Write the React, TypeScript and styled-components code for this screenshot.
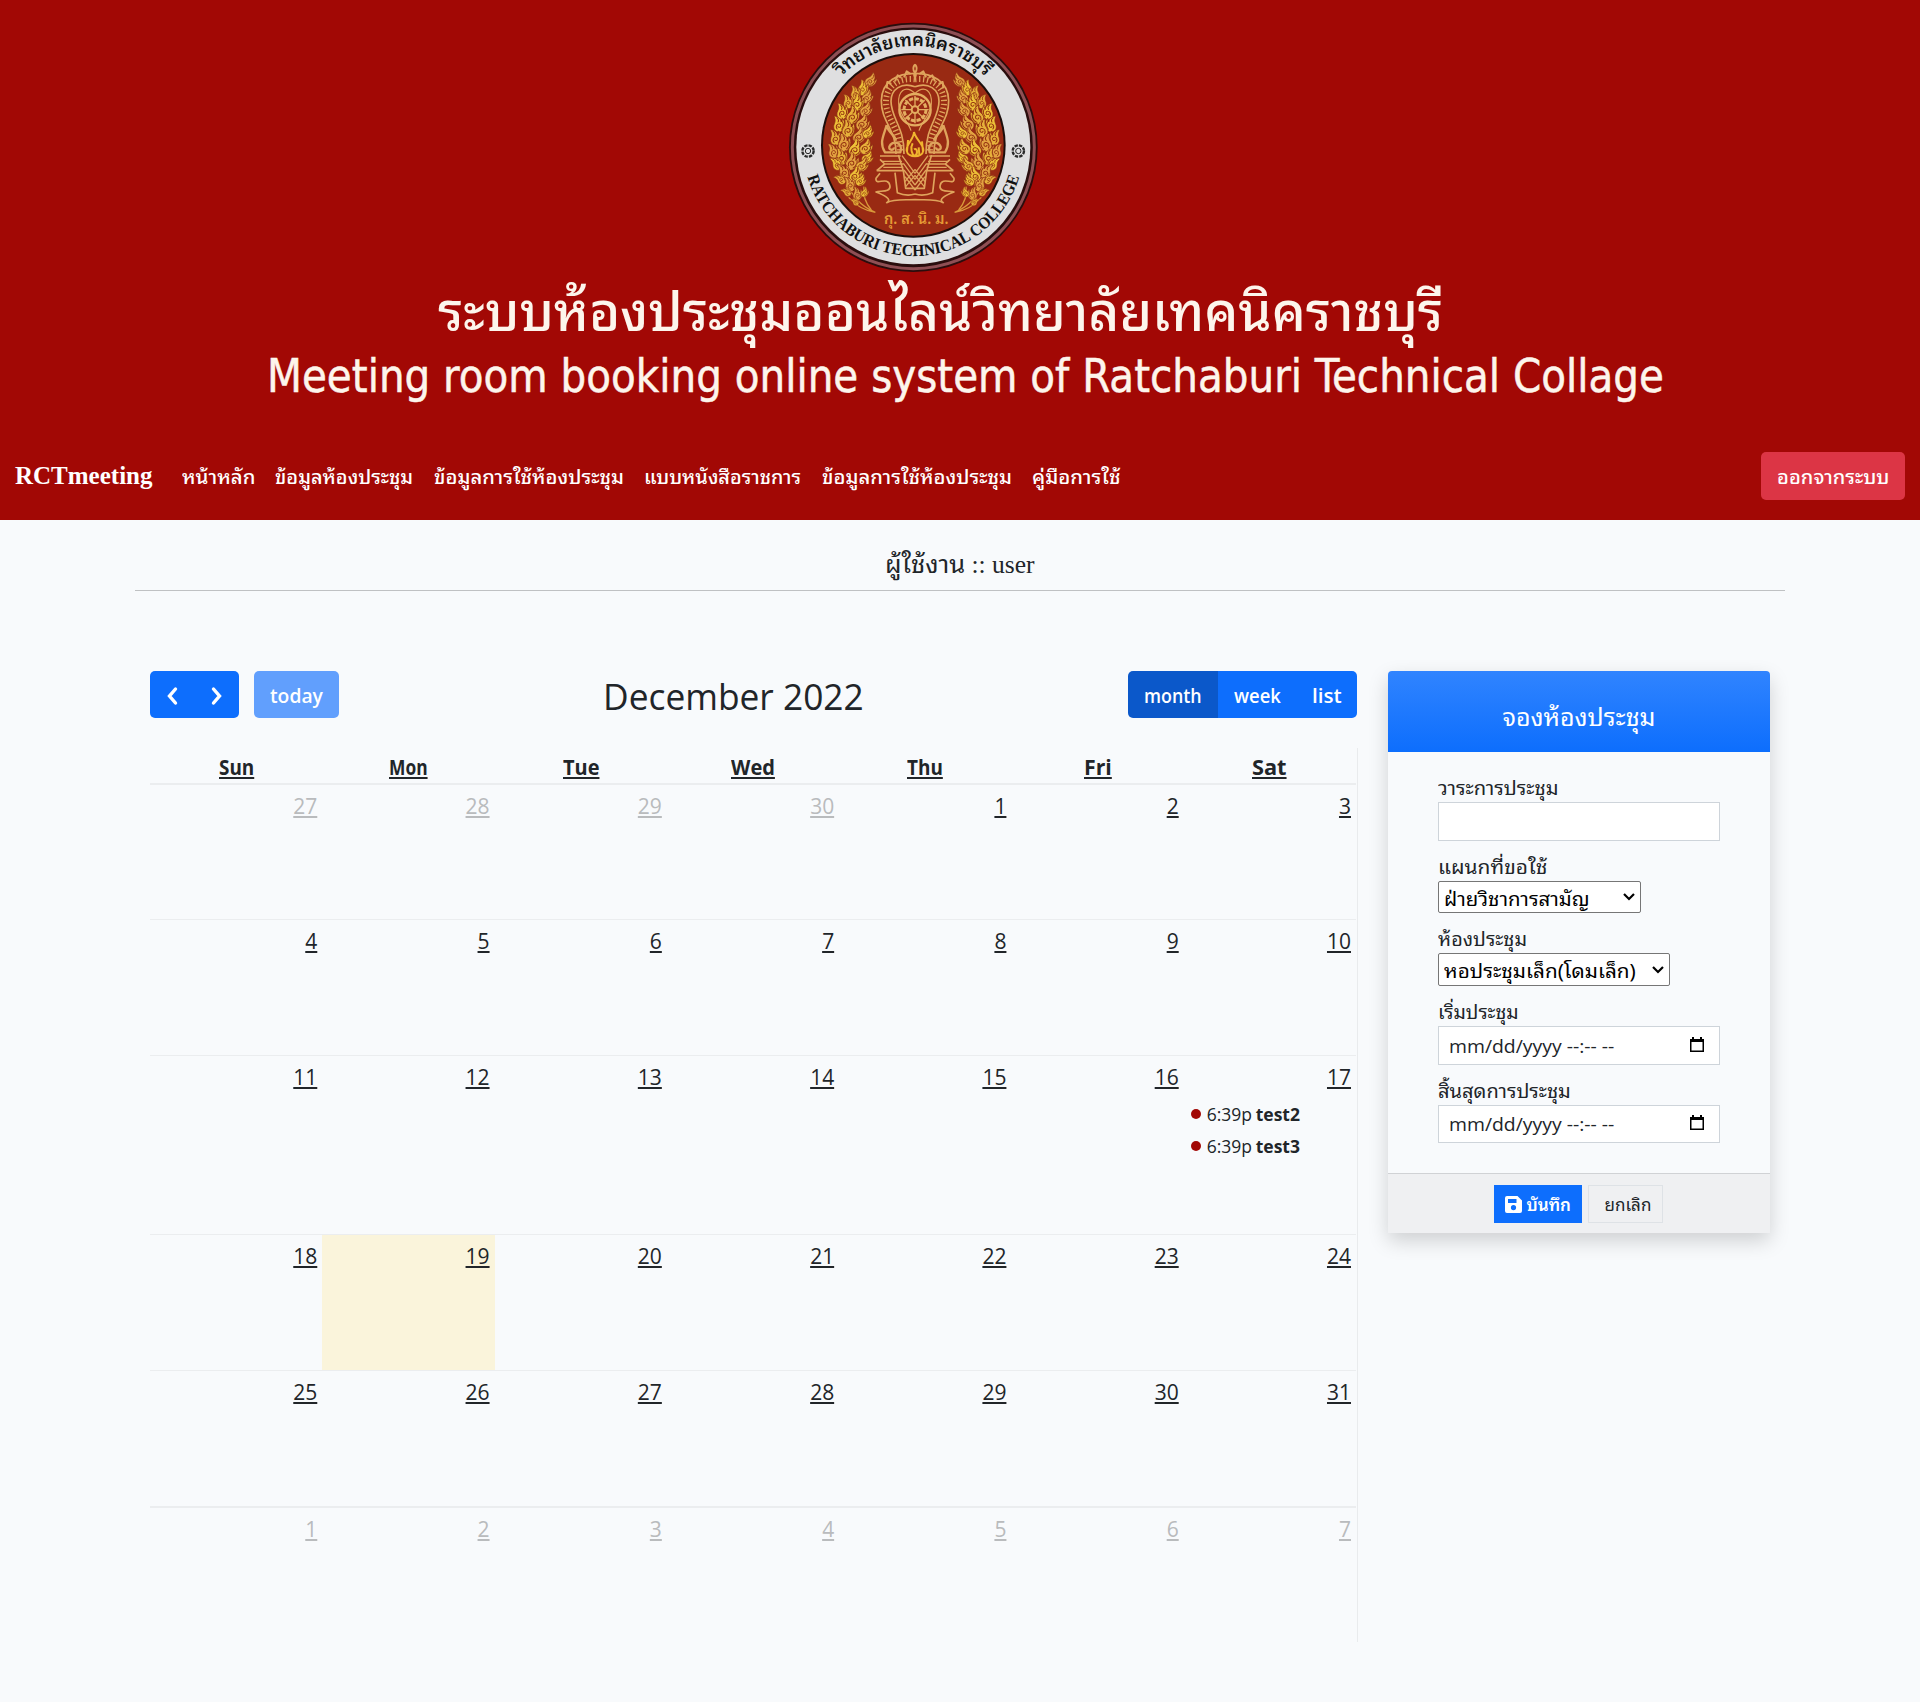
import React, { useLayoutEffect, useRef, useState } from "react";
import styled, { createGlobalStyle } from "styled-components";

const comic = `"Open Sans", "Noto Sans", "Noto Sans Thai", sans-serif`;
const thai = `"Noto Sans Thai Looped", "Noto Looped Thai", "Loma", "Waree", "Garuda", "Noto Sans Thai", "Noto Sans", sans-serif`;
const serif = `"Liberation Serif", "Noto Sans Thai Looped", "Noto Looped Thai", "Loma", "Waree", "Garuda", serif`;

const GlobalStyle = createGlobalStyle`
  *, *::before, *::after { box-sizing: border-box; }
  body { margin: 0; background: #f8fafc; color: #212529; font-family: ${comic}; font-size: 20px; }
  button, select, input { font-family: inherit; }
`;

/* Text that is condensed or widened to a known measure */
const FitBox = styled.span<{ $w: number }>`
  display: inline-block;
  flex: none;
  width: ${(p) => p.$w}px;
  text-align: left;
  white-space: nowrap;
  text-decoration: inherit;
`;
const FitInner = styled.span`
  display: inline-block;
  transform-origin: 0 50%;
  white-space: nowrap;
  text-decoration: inherit;
`;
function Fit({ w, children }: { w: number; children: React.ReactNode }) {
  const ref = useRef<HTMLSpanElement>(null);
  const [scale, setScale] = useState(1);
  useLayoutEffect(() => {
    if (ref.current && ref.current.offsetWidth) {
      setScale(w / ref.current.offsetWidth);
    }
  }, [w]);
  return (
    <FitBox $w={w}>
      <FitInner ref={ref} style={{ transform: `scaleX(${scale})` }}>
        {children}
      </FitInner>
    </FitBox>
  );
}

/* ---------- banner ---------- */
const Banner = styled.header`
  height: 520px;
  background: #a20805;
  color: #fff;
  display: flex;
  flex-direction: column;
`;
const Hero = styled.div`
  height: 430px;
  padding-top: 10px;
  display: flex;
  flex-direction: column;
  color: #fdf5ec;
`;
const LogoSvg = styled.svg`
  display: block;
  flex: none;
  margin-left: 770px;
`;
const ThaiTitle = styled.div`
  height: 66px;
  margin-left: 438px;
  font: 500 54px/54px ${thai};
`;
const EnglishTitle = styled.div`
  height: 60px;
  margin-left: 267px;
  font: 47px/60px "DejaVu Sans Condensed", "DejaVu Sans", sans-serif;
  font-stretch: condensed;
  -webkit-text-stroke: 0.5px #fdf5ec;
`;
const Nav = styled.nav`
  height: 90px;
  padding: 2px 15px 0;
  display: flex;
  align-items: center;
`;
const Brand = styled.a`
  font: bold 25px/38px ${serif};
  margin-right: 30px;
`;
const Links = styled.div`
  display: flex;
  gap: 20.4px;
  flex: 1;
`;
const NavLink = styled.a`
  font: 500 19px/28px ${thai};
`;
const Logout = styled.button`
  width: 144px;
  height: 48px;
  border: 0;
  border-radius: 5px;
  padding: 0 0 1px;
  background: #dc3545;
  color: #fff;
  font: 500 19px/30px ${thai};
`;

/* ---------- page ---------- */
const Page = styled.main`
  width: 1650px;
  margin: 0 auto;
`;
const UserLine = styled.div`
  height: 71px;
  padding-top: 25px;
  border-bottom: 1px solid #bfc1c3;
  text-align: center;
  font: 25px/40px ${serif};
`;
const Columns = styled.div`
  display: flex;
  padding: 80px 15px 0;
  align-items: flex-start;
`;
const Calendar = styled.section`
  width: 1208px;
  margin-right: 30px;
`;
const Toolbar = styled.div`
  height: 47px;
  display: flex;
  justify-content: space-between;
  padding-right: 1px;
`;
const Group = styled.div`
  display: flex;
`;
const ToolButton = styled.button<{ $w: number; $tone?: string; $pos?: "first" | "mid" | "last" }>`
  width: ${(p) => p.$w}px;
  height: 47px;
  border: 0;
  padding: 2px 0 0;
  display: flex;
  align-items: center;
  justify-content: center;
  color: #fff;
  background: ${(p) => p.$tone || "#0d6efd"};
  border-radius: ${(p) =>
    p.$pos === "first" ? "5px 0 0 5px" : p.$pos === "last" ? "0 5px 5px 0" : p.$pos === "mid" ? "0" : "5px"};
  font: 600 20px/30px ${comic};
`;
const Gap = styled.div`
  width: 15px;
`;
const MonthTitle = styled.h2`
  margin: 0;
  font: 400 36px/51px ${comic};
`;
const Grid = styled.div`
  margin-top: 30px;
  border-right: 1px solid #e9ebed;
`;
const HeadRow = styled.div`
  display: grid;
  grid-template-columns: repeat(7, 1fr);
  height: 37px;
  border-bottom: 2px solid #ebedef;
  margin-right: 1px;
`;
const HeadCell = styled.div`
  text-align: center;
  font: 700 20.5px/38px ${comic};
  text-decoration: underline;
  text-decoration-thickness: 2px;
  text-underline-offset: 2px;
`;
const Week = styled.div<{ $h: number; $line?: number }>`
  display: grid;
  grid-template-columns: repeat(7, 1fr);
  height: ${(p) => p.$h}px;
  margin-right: 1px;
  border-bottom: ${(p) => p.$line ?? 1}px solid #ebedef;
`;
const Day = styled.div<{ $today?: boolean }>`
  padding: 5px 5px 0;
  background: ${(p) => (p.$today ? "#faf4db" : "transparent")};
`;
const DayNumber = styled.div<{ $muted?: boolean }>`
  text-align: right;
  font: 21px/32px ${comic};
  height: 37px;
  color: ${(p) => (p.$muted ? "#b9bbbd" : "#212529")};
  text-decoration: underline;
  text-decoration-thickness: 2px;
  text-underline-offset: 2px;
`;
const Event = styled.div`
  display: flex;
  align-items: center;
  height: 32px;
  padding-left: 2px;
  font: 17.5px/32px ${comic};
`;
const Dot = styled.i`
  width: 10px;
  height: 10px;
  border-radius: 50%;
  background: #a20805;
  margin-right: 6px;
`;
const EventName = styled.b`
  margin-left: 4px;
`;

/* ---------- booking card ---------- */
const Card = styled.aside`
  width: 382px;
  border-radius: 4px;
  box-shadow: 0 8px 20px rgba(0, 0, 0, 0.17);
  background: #f8fafc;
`;
const CardHead = styled.div`
  height: 81px;
  border-radius: 4px 4px 0 0;
  background: linear-gradient(180deg, #3084ff, #0d6efd);
  color: #fff;
  text-align: center;
  font: 25px/88px ${thai};
`;
const CardBody = styled.div`
  height: 421px;
  padding: 20px 50px 0;
`;
const Label = styled.label`
  display: block;
  height: 30px;
  font: 19px/30px ${thai};
`;
const Input = styled.div<{ $h?: number }>`
  height: ${(p) => p.$h ?? 39}px;
  margin-bottom: 10px;
  background: #fff;
  border: 1px solid #ced4da;
  display: flex;
  align-items: center;
  justify-content: space-between;
  padding: 0 15px 0 10px;
  font: 17.5px/30px ${comic};
`;
const Select = styled.div<{ $w: number; $h: number }>`
  width: ${(p) => p.$w}px;
  height: ${(p) => p.$h}px;
  margin-bottom: 10px;
  background: #fff;
  color: #000;
  border: 1px solid #767676;
  border-radius: 2px;
  display: flex;
  align-items: center;
  justify-content: space-between;
  padding: 0 5px;
  font: 19px/30px ${thai};
`;
const SelectText = styled.span`
  padding-top: 1px;
`;
const CardFoot = styled.div`
  height: 60px;
  border-top: 1px solid #d0d2d5;
  background: #eff0f2;
  display: flex;
  justify-content: center;
  padding: 11px 2px 0 0;
  gap: 6px;
`;
const SmallButton = styled.button<{ $primary?: boolean }>`
  width: ${(p) => (p.$primary ? 88 : 75)}px;
  height: 38px;
  border: 1px solid ${(p) => (p.$primary ? "#0d6efd" : "#dee2e6")};
  background: ${(p) => (p.$primary ? "#0d6efd" : "transparent")};
  color: ${(p) => (p.$primary ? "#fff" : "#212529")};
  display: flex;
  align-items: center;
  justify-content: ${(p) => (p.$primary ? "center" : "flex-end")};
  gap: 5px;
  padding: 0 10px;
  font: ${(p) => (p.$primary ? 600 : 400)} 17px/30px ${thai};
`;

/* x, y, scale, tilt of each tongue of flame, drawn from the tip of the wing down */
const flames: [number, number, number, number][] = [
  [302, 212, 0.8, 30], [278, 236, 0.85, 5], [256, 250, 0.8, -12], [292, 262, 0.8, 25],
  [262, 280, 0.95, 8], [234, 276, 0.8, -15], [288, 300, 0.85, 28], [216, 306, 0.9, -12],
  [248, 318, 1, 8], [278, 340, 0.95, 24], [206, 344, 0.9, -14], [234, 358, 1, -4],
  [268, 378, 0.95, 20], [294, 368, 0.75, 30], [196, 384, 0.9, -18], [222, 400, 1, -6],
  [256, 416, 1, 14], [288, 412, 0.9, 24], [190, 424, 0.85, -22], [292, 444, 0.75, 38],
  [214, 442, 0.95, -12], [246, 456, 1, 8], [200, 462, 0.8, -38], [276, 466, 0.85, 34],
  [222, 486, 0.9, -30], [256, 496, 0.9, 16], [212, 508, 0.7, -60], [240, 524, 0.85, -24],
  [272, 512, 0.7, 32], [230, 546, 0.6, -62], [262, 552, 0.75, -10], [284, 548, 0.55, 20],
  [256, 576, 0.5, -50],
];

function FlameWing() {
  return (
    <g>
      <path d="M222 500Q250 580 316 607Q270 600 236 562" fill="none" stroke="#d9993a" strokeWidth="4" />
      <path d="M282 530Q276 566 304 600" fill="none" stroke="#d9993a" strokeWidth="4" />
      {flames.map(([x, y, s, r], i) => (
        <g key={i} transform={`translate(${x} ${y}) rotate(${r}) scale(${s * 1.2} ${s * 1.08})`} strokeLinecap="round">
          <path
            d="M0 24C-17 20-19 5-11-6C-6-13-5-19-7-30C5-24 11-14 8-6C13-9 14-13 14-18C21-4 17 18 0 24Z"
            fill={i % 3 === 0 ? "#e2a241" : i % 3 === 1 ? "#edc038" : "#e6b03a"}
            stroke="#8c2a12"
            strokeWidth="2"
          />
          <path d="M-7 12C-12 0 2-8 5 2C6 9-2 11-3 5M0-22C4-16 2-10 0-8M12-6C14 2 12 10 5 16" fill="none" stroke="#93300f" strokeWidth="2.6" />
        </g>
      ))}
    </g>
  );
}

function HalfThrone() {
  return (
    <g fill="none" stroke="#dfa45c" strokeWidth="5" strokeLinejoin="round">
      <path d="M435 190C385 190 335 212 334 272C333 335 380 360 378 432M435 230C395 215 363 238 363 274C363 325 403 350 402 432" />
      <path d="M435 208C388 203 350 225 348 273C347 328 391 352 390 428" strokeWidth="18" strokeDasharray="4 8" />
      <path d="M435 250C405 222 383 245 386 282C389 315 415 335 423 362" strokeWidth="3.5" />
      <path d="M350 345C342 375 326 398 345 427H391C402 395 365 389 358 410C355 422 374 422 371 412M350 345C353 367 374 373 378 392" strokeWidth="7" />
      <path d="M435 163C418 184 447 189 435 200M402 202L410 184L422 192M375 214L383 196L393 203M350 235L352 216L364 222" strokeWidth="6" />
      <path d="M330 438H392M330 448L344 462H400M320 482L344 462M320 482H402M330 490L318 505C315 530 355 495 360 528C362 548 330 541 318 546C340 554 369 568 350 578C371 566 400 570 435 569M385 435L400 482L407 535H435M375 488L382 548Q410 560 435 552" />
      <path d="M334 454H396M340 472H400" strokeWidth="3.5" />
      <path d="M396 437L435 490M400 460L435 508M402 480L435 525M405 500L435 540M407 530L435 496M405 515L435 478" strokeWidth="4" />
    </g>
  );
}

function Logo() {
  return (
    <LogoSvg width="290" height="270" viewBox="0 0 870 810">
      <defs>
        <path id="arcTop" d="M131 407A299 299 0 0 1 729 407" />
        <path id="arcBottom" d="M99 407A331 331 0 0 0 761 407" />
      </defs>
      <ellipse cx="430" cy="412" rx="373" ry="374" fill="#2a0d0d" />
      <ellipse cx="430" cy="412" rx="363" ry="364" fill="none" stroke="#8f4f54" strokeWidth="9" />
      <ellipse cx="430" cy="411" rx="351" ry="352" fill="#dfdfe0" />
      <circle cx="430" cy="406" r="277" fill="#1c0e0b" />
      <circle cx="430" cy="406" r="271" fill="#992a13" />
      <text fontFamily={thai} fontSize="54" fontWeight="600" fill="#111">
        <textPath href="#arcTop" startOffset="50%" textAnchor="middle" textLength="482" lengthAdjust="spacingAndGlyphs">วิทยาลัยเทคนิคราชบุรี</textPath>
      </text>
      <text fontFamily="Liberation Serif, serif" fontSize="50" fontWeight="700" fill="#111">
        <textPath href="#arcBottom" startOffset="50%" textAnchor="middle" textLength="850" lengthAdjust="spacingAndGlyphs">RATCHABURI TECHNICAL COLLEGE</textPath>
      </text>
      {[114, 745].map((x) => (
        <g key={x} fill="none" stroke="#292929">
          <circle cx={x} cy="423" r="17" strokeWidth="7" strokeDasharray="10 3.3" />
          <circle cx={x} cy="423" r="8" strokeWidth="3" />
        </g>
      ))}
      <FlameWing />
      <g transform="translate(870 0) scale(-1 1)"><FlameWing /></g>
      <HalfThrone />
      <g transform="translate(870 0) scale(-1 1)"><HalfThrone /></g>
      <g fill="none" stroke="#e3ad60">
        <circle cx="435" cy="299" r="47" strokeWidth="7" />
        <circle cx="435" cy="299" r="33" strokeWidth="9" strokeDasharray="13 4" />
        <circle cx="435" cy="299" r="10" strokeWidth="6" />
        {[0, 45, 90, 135].map((a) => (
          <path key={a} d="M435 258V290M435 308V340" strokeWidth="4" transform={`rotate(${a} 435 299)`} />
        ))}
        <path d="M432 366C432 388 408 402 410 422C413 444 457 444 460 422C462 404 438 390 432 366ZM428 400C420 414 425 434 435 438C446 429 440 412 432 418M414 390L411 425M456 394L459 425M446 412L448 434" stroke="#f0b52f" strokeWidth="6" />
      </g>
      <text x="342" y="642" fontFamily={thai} fontSize="48" fontWeight="600" fill="#e59a35" textLength="194" lengthAdjust="spacingAndGlyphs">กุ. ส. นิ. ม.</text>
    </LogoSvg>
  );
}

const navLinks: [string, number][] = [
  ["หน้าหลัก", 73], ["ข้อมูลห้องประชุม", 138.5], ["ข้อมูลการใช้ห้องประชุม", 189.5],
  ["แบบหนังสือราชการ", 157.5], ["ข้อมูลการใช้ห้องประชุม", 189.5], ["คู่มือการใช้", 89],
];
const heads: [string, number][] = [["Sun", 35], ["Mon", 39], ["Tue", 36], ["Wed", 44], ["Thu", 36], ["Fri", 28], ["Sat", 35]];
const weeks = [
  { h: 135, start: -3 }, { h: 136, start: 4 }, { h: 179, start: 11 },
  { h: 136, start: 18 }, { h: 137, start: 25, line: 2 }, { h: 134, start: 32, line: 0 },
];
const events = [["6:39p", "test2"], ["6:39p", "test3"]];

const Chevron = ({ d }: { d: string }) => (
  <svg width="20" height="20" viewBox="0 0 20 20" fill="none" stroke="#fff" strokeWidth="3.4" strokeLinecap="round">
    <path d={d} />
  </svg>
);
const SelectArrow = () => (
  <svg width="12" height="8" viewBox="0 0 12 8" fill="none" stroke="#000" strokeWidth="2.2">
    <path d="M1 1L6 6L11 1" />
  </svg>
);
const CalendarIcon = () => (
  <svg width="14" height="18" viewBox="0 0 14 18">
    <path d="M2 0H4V2H10V0H12V2H14V15H0V2H2ZM1.5 5V13.5H12.5V5Z" fillRule="evenodd" fill="#000" />
  </svg>
);
const SaveIcon = () => (
  <svg width="17" height="17" viewBox="0 0 17 17">
    <path d="M2 0H12.5L17 4.5V15Q17 17 15 17H2Q0 17 0 15V2Q0 0 2 0ZM3 3V7H11.5V3ZM8.5 9A2.6 2.6 0 1 0 8.5 14.2A2.6 2.6 0 1 0 8.5 9" fillRule="evenodd" fill="#fff" />
  </svg>
);
const DateField = ({ h }: { h: number }) => (
  <Input $h={h}>
    <Fit w={165}>mm/dd/yyyy --:-- --</Fit>
    <CalendarIcon />
  </Input>
);

export default function App() {
  return (
    <>
      <GlobalStyle />
      <Banner>
        <Hero>
          <Logo />
          <ThaiTitle><Fit w={1005}>ระบบห้องประชุมออนไลน์วิทยาลัยเทคนิคราชบุรี</Fit></ThaiTitle>
          <EnglishTitle><Fit w={1397}>Meeting room booking online system of Ratchaburi Technical Collage</Fit></EnglishTitle>
        </Hero>
        <Nav>
          <Brand><Fit w={137}>RCTmeeting</Fit></Brand>
          <Links>
            {navLinks.map(([t, w], i) => <NavLink key={i}><Fit w={w}>{t}</Fit></NavLink>)}
          </Links>
          <Logout><Fit w={112}>ออกจากระบบ</Fit></Logout>
        </Nav>
      </Banner>
      <Page>
        <UserLine><Fit w={150}>ผู้ใช้งาน :: user</Fit></UserLine>
        <Columns>
          <Calendar>
            <Toolbar>
              <Group>
                <ToolButton $w={45} $pos="first"><Chevron d="M12.5 3L6.5 10L12.5 17" /></ToolButton>
                <ToolButton $w={44} $pos="last"><Chevron d="M6.5 3L12.5 10L6.5 17" /></ToolButton>
                <Gap />
                <ToolButton $w={85} $tone="#619ffd"><Fit w={53}>today</Fit></ToolButton>
              </Group>
              <MonthTitle><Fit w={261}>December 2022</Fit></MonthTitle>
              <Group>
                <ToolButton $w={90} $pos="first" $tone="#0b58ca"><Fit w={58}>month</Fit></ToolButton>
                <ToolButton $w={78} $pos="mid"><Fit w={47}>week</Fit></ToolButton>
                <ToolButton $w={61} $pos="last"><Fit w={30}>list</Fit></ToolButton>
              </Group>
            </Toolbar>
            <Grid>
              <HeadRow>
                {heads.map(([t, w]) => <HeadCell key={t}><Fit w={w}>{t}</Fit></HeadCell>)}
              </HeadRow>
              {weeks.map((wk) => (
                <Week key={wk.start} $h={wk.h} $line={wk.line}>
                  {[0, 1, 2, 3, 4, 5, 6].map((i) => {
                    const n = wk.start + i;
                    const muted = n < 1 || n > 31;
                    const label = n < 1 ? n + 30 : n > 31 ? n - 31 : n;
                    return (
                      <Day key={i} $today={n === 19}>
                        <DayNumber $muted={muted}>{label}</DayNumber>
                        {n === 17 && events.map(([time, name]) => (
                          <Event key={name}>
                            <Dot />
                            <Fit w={45}>{time}</Fit>
                            <EventName><Fit w={44}>{name}</Fit></EventName>
                          </Event>
                        ))}
                      </Day>
                    );
                  })}
                </Week>
              ))}
            </Grid>
          </Calendar>
          <Card>
            <CardHead><Fit w={153}>จองห้องประชุม</Fit></CardHead>
            <CardBody>
              <Label><Fit w={121}>วาระการประชุม</Fit></Label>
              <Input />
              <Label><Fit w={109}>แผนกที่ขอใช้</Fit></Label>
              <Select $w={203} $h={32}><SelectText><Fit w={146}>ฝ่ายวิชาการสามัญ</Fit></SelectText><SelectArrow /></Select>
              <Label><Fit w={89}>ห้องประชุม</Fit></Label>
              <Select $w={232} $h={33}><SelectText><Fit w={192}>หอประชุมเล็ก(โดมเล็ก)</Fit></SelectText><SelectArrow /></Select>
              <Label><Fit w={81}>เริ่มประชุม</Fit></Label>
              <DateField h={39} />
              <Label><Fit w={133}>สิ้นสุดการประชุม</Fit></Label>
              <DateField h={38} />
            </CardBody>
            <CardFoot>
              <SmallButton $primary><SaveIcon /><Fit w={44}>บันทึก</Fit></SmallButton>
              <SmallButton><Fit w={47}>ยกเลิก</Fit></SmallButton>
            </CardFoot>
          </Card>
        </Columns>
      </Page>
    </>
  );
}
